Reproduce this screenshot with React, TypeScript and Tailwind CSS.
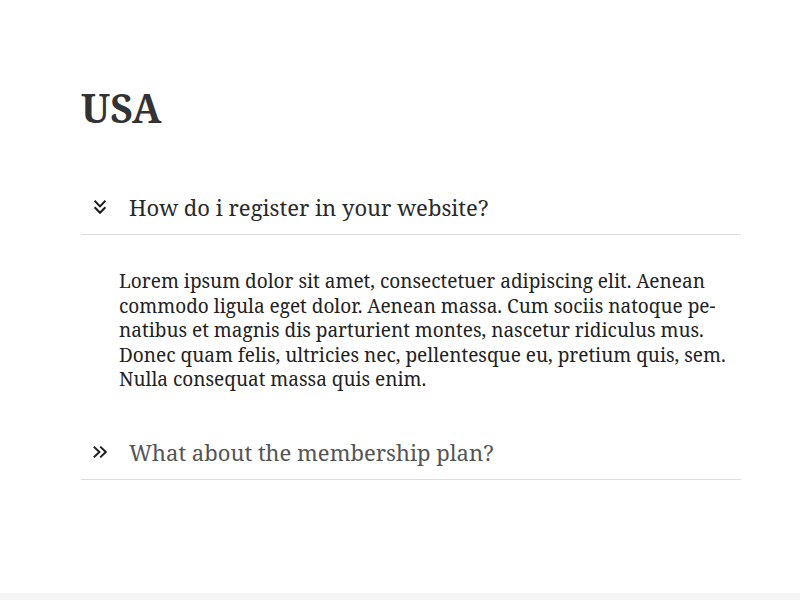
import { useState } from "react";

const faqs = [
  {
    q: "How do i register in your website?",
    a: "Lorem ipsum dolor sit amet, consectetuer adipiscing elit. Aenean commodo ligula eget dolor. Aenean massa. Cum sociis natoque pe\u00adnatibus et magnis dis parturient montes, nascetur ridiculus mus. Donec quam felis, ultricies nec, pellentesque eu, pretium quis, sem. Nulla consequat massa quis enim.",
  },
  {
    q: "What about the membership plan?",
    a: "Lorem ipsum dolor sit amet, consectetuer adipiscing elit. Aenean commodo ligula eget dolor.",
  },
];

function Chevrons({ open }: { open: boolean }) {
  return (
    <svg
      width="16"
      height="16"
      viewBox="0 0 16 16"
      fill="none"
      stroke="#1e1e1e"
      strokeWidth="2"
      className={open ? "rotate-90" : ""}
    >
      <path d="M1.8 2.6L7.4 8l-5.6 5.4" />
      <path d="M8.2 2.6L13.8 8l-5.6 5.4" />
    </svg>
  );
}

export default function App() {
  const [open, setOpen] = useState(0);

  return (
    <div
      className="min-h-[600px] flex flex-col bg-white"
      style={{ fontFamily: '"Noto Serif", "DejaVu Serif", serif' }}
    >
      <main className="flex-1 px-[81px] pt-[84px]">
        <h1 className="text-[39px] font-bold text-[#333] leading-[48px]">USA</h1>
        <div className="mt-[56px] w-[660px]">
          {faqs.map((f, i) => (
            <div key={f.q}>
              <button
                onClick={() => setOpen(open === i ? -1 : i)}
                className="w-full flex items-center gap-[21px] pl-[11px] pb-[8px] h-[47px] border-b border-[#dcdcdc] text-left"
              >
                <Chevrons open={open === i} />
                <span
                  className={
                    "text-[22px] leading-7 " +
                    (open === i ? "text-[#2a2a2a]" : "text-[#555]")
                  }
                >
                  {f.q}
                </span>
              </button>
              {open === i && (
                <p
                  lang="en"
                  className="pl-[38px] pr-[10px] pt-[34px] pb-[41px] text-[19px] leading-[24.6px] text-[#222]"
                >
                  {f.a}
                </p>
              )}
            </div>
          ))}
        </div>
      </main>
      <footer className="h-[7px] bg-[#f5f5f5]" />
    </div>
  );
}
